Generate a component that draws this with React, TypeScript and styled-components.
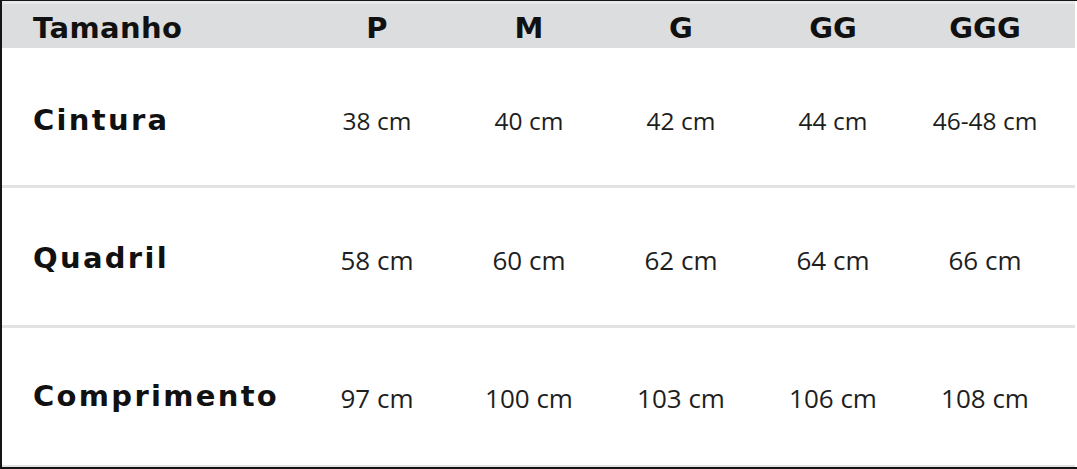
import React from 'react';
import styled, { createGlobalStyle } from 'styled-components';

const GlobalStyle = createGlobalStyle`
  html, body {
    margin: 0;
    padding: 0;
    background: #ffffff;
  }
  * {
    box-sizing: border-box;
  }
`;

const Frame = styled.div`
  width: 1077px;
  height: 469px;
  border-top: 1px solid #141414;
  border-left: 2px solid #141414;
  border-bottom: 2px solid #141414;
  background: #ffffff;
  overflow: hidden;
`;

const Table = styled.div`
  width: 1073px;
  padding-top: 3px;
  background: #e9e9ea;
  display: flex;
  flex-direction: column;
`;

const HeaderRow = styled.div`
  display: grid;
  grid-template-columns: 299px repeat(5, 152px) 1fr;
  align-items: center;
  height: 44px;
  padding-top: 3px;
  background: #dcdddf;
`;

const BodyRow = styled.div`
  display: grid;
  grid-template-columns: 299px repeat(5, 152px) 1fr;
  align-items: center;
  height: 137px;
  background: #ffffff;
  border-bottom: 3px solid #e3e3e4;
  box-sizing: content-box;
`;

const HeaderLabel = styled.div`
  padding-left: 31px;
  font-family: 'DejaVu Sans', sans-serif;
  font-weight: 700;
  font-size: 29px;
  letter-spacing: 0.4px;
  color: #111111;
`;

const HeaderCell = styled.div`
  text-align: center;
  font-family: 'DejaVu Sans', sans-serif;
  font-weight: 700;
  font-size: 29px;
  color: #111111;
`;

const RowLabel = styled.div<{ $shift: number }>`
  padding-left: 31px;
  margin-top: ${({ $shift }) => $shift}px;
  font-family: 'DejaVu Sans', sans-serif;
  font-weight: 700;
  font-size: 29px;
  letter-spacing: 2.3px;
  color: #111111;
`;

const ValueCell = styled.div<{ $shift: number; $size: number }>`
  text-align: center;
  margin-top: ${({ $shift }) => $shift}px;
  font-family: 'Open Sans', sans-serif;
  font-size: ${({ $size }) => $size}px;
  color: #1e1e1e;
`;

interface Measure {
  label: string;
  values: string[];
  labelShift: number;
  valueShift: number;
  valueSize: number;
}

const sizes = ['P', 'M', 'G', 'GG', 'GGG'];

const measures: Measure[] = [
  {
    label: 'Cintura',
    values: ['38 cm', '40 cm', '42 cm', '44 cm', '46-48 cm'],
    labelShift: 6,
    valueShift: 7,
    valueSize: 24.5,
  },
  {
    label: 'Quadril',
    values: ['58 cm', '60 cm', '62 cm', '64 cm', '66 cm'],
    labelShift: 3,
    valueShift: 6,
    valueSize: 26,
  },
  {
    label: 'Comprimento',
    values: ['97 cm', '100 cm', '103 cm', '106 cm', '108 cm'],
    labelShift: -1,
    valueShift: 2,
    valueSize: 26,
  },
];

export default function App() {
  return (
    <>
      <GlobalStyle />
      <Frame>
        <Table>
          <HeaderRow>
            <HeaderLabel>Tamanho</HeaderLabel>
            {sizes.map((s) => (
              <HeaderCell key={s}>{s}</HeaderCell>
            ))}
          </HeaderRow>
          {measures.map((m) => (
            <BodyRow key={m.label}>
              <RowLabel $shift={m.labelShift}>{m.label}</RowLabel>
              {m.values.map((v, i) => (
                <ValueCell key={i} $shift={m.valueShift} $size={m.valueSize}>
                  {v}
                </ValueCell>
              ))}
            </BodyRow>
          ))}
        </Table>
      </Frame>
    </>
  );
}
